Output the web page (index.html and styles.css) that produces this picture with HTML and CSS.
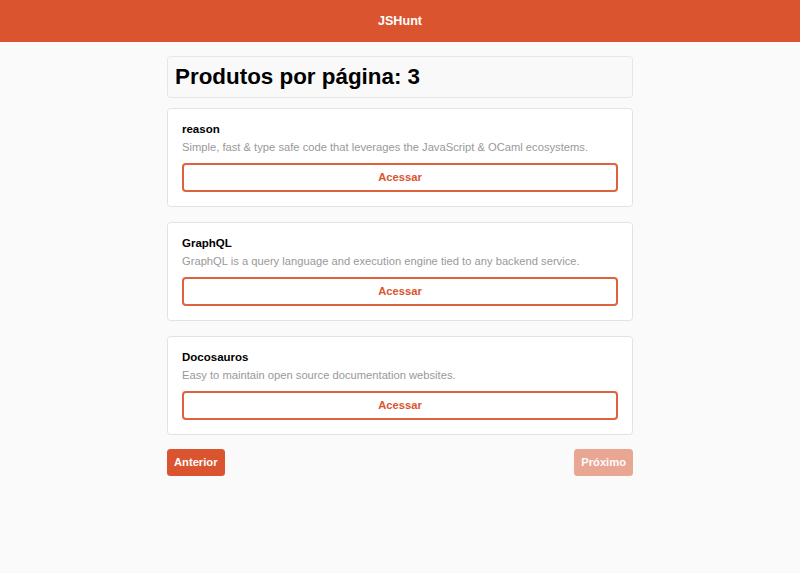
FILE: index.html
```html
<!DOCTYPE html>
<html lang="pt-BR">
<head>
<meta charset="utf-8">
<title>JSHunt</title>
<link rel="stylesheet" href="styles.css">
</head>
<body>
<header class="main-header">JSHunt</header>
<main class="main">
  <div class="page-info">
    <h1 class="page-title">Produtos por página: 3</h1>
  </div>
  <div class="product-list">
    <article class="product">
      <strong class="product-title">reason</strong>
      <p class="product-desc">Simple, fast &amp; type safe code that leverages the JavaScript &amp; OCaml ecosystems.</p>
      <a class="product-link" href="#">Acessar</a>
    </article>
    <article class="product">
      <strong class="product-title">GraphQL</strong>
      <p class="product-desc">GraphQL is a query language and execution engine tied to any backend service.</p>
      <a class="product-link" href="#">Acessar</a>
    </article>
    <article class="product">
      <strong class="product-title">Docosauros</strong>
      <p class="product-desc">Easy to maintain open source documentation websites.</p>
      <a class="product-link" href="#">Acessar</a>
    </article>
  </div>
  <div class="actions">
    <button class="action-btn" type="button">Anterior</button>
    <button class="action-btn" type="button" disabled>Próximo</button>
  </div>
</main>
</body>
</html>
```
FILE: styles.css
```css
* {
  margin: 0;
  padding: 0;
  box-sizing: border-box;
}

body {
  background: #fafafa;
  font-family: "Liberation Sans", Arial, Helvetica, sans-serif;
  -webkit-font-smoothing: antialiased;
}

.main-header {
  height: 42px;
  background: #da552f;
  color: #fff;
  font-size: 12.6px;
  font-weight: bold;
  display: flex;
  align-items: center;
  justify-content: center;
}

.main {
  width: 466px;
  margin: 14px auto 0;
}

.page-info {
  background: #f9f9f9;
  border: 1px solid #e6e6e6;
  border-radius: 3.5px;
  padding: 7px;
  margin-bottom: 10px;
}

.page-title {
  font-size: 22.4px;
  font-weight: bold;
  color: #000;
  line-height: 26px;
}

.product {
  background: #fff;
  border: 1px solid #e2e2e2;
  border-radius: 3.5px;
  padding: 14px;
  margin-bottom: 14.8px;
  display: flex;
  flex-direction: column;
}

.product-title {
  font-size: 11.5px;
  color: #000;
  line-height: 12px;
}

.product-desc {
  font-size: 11.2px;
  color: #999;
  margin-top: 4px;
  line-height: 16.8px;
}

.product-link {
  height: 29.4px;
  border-radius: 4px;
  border: 2px solid #e0613d;
  margin-top: 7px;
  color: #da552f;
  font-weight: bold;
  font-size: 11.2px;
  text-decoration: none;
  display: flex;
  align-items: center;
  justify-content: center;
}

.actions {
  display: flex;
  justify-content: space-between;
  margin-top: -1px;
}

.action-btn {
  padding: 7px;
  border-radius: 3.5px;
  border: 0;
  background: #da552f;
  color: #fff;
  font-family: inherit;
  font-size: 11.2px;
  font-weight: bold;
  line-height: 13px;
  cursor: pointer;
}

.action-btn:disabled {
  opacity: 0.5;
  cursor: default;
}
```
